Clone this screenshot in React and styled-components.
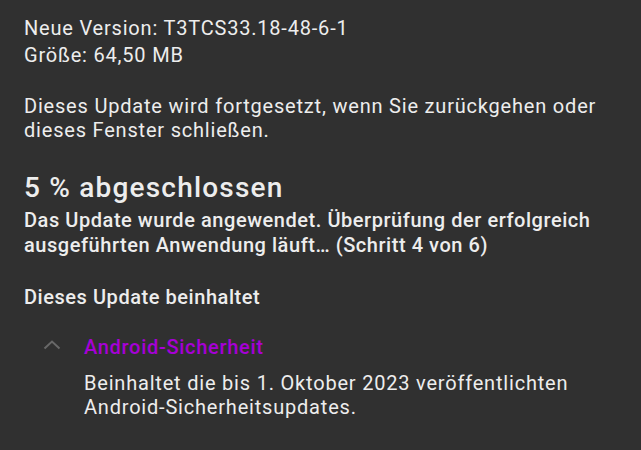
import React from 'react';
import styled, { createGlobalStyle } from 'styled-components';

const GlobalStyle = createGlobalStyle`
    html, body {
        margin: 0;
        background: #303030;
    }
    body {
        font-family: Roboto, "Noto Sans", sans-serif;
        color: #ededed;
    }
`;

const Page = styled.div`
    width: 641px;
    height: 450px;
    box-sizing: border-box;
    padding: 15px 24px 0 24px;
    background: #303030;
    overflow: hidden;
`;

const InfoLine = styled.div`
    font-size: 20px;
    line-height: 27px;
    letter-spacing: 0.8px;
`;

const Paragraph = styled.p`
    margin: ${(props) => props.top || 0}px 0 0 0;
    font-size: 20px;
    line-height: ${(props) => (props.bold ? 25 : 24)}px;
    font-weight: ${(props) => (props.bold ? 500 : 400)};
    letter-spacing: ${(props) => (props.bold ? 0.55 : 0.8)}px;
`;

const Progress = styled.h2`
    margin: 30px 0 0 0;
    font-size: 28px;
    line-height: 32px;
    font-weight: 500;
    letter-spacing: 1.2px;
`;

const Entry = styled.div`
    display: flex;
    margin-top: 25px;
`;

const Chevron = styled.div`
    width: 60px;
    flex-shrink: 0;
    display: flex;
    justify-content: flex-start;
    padding: 5px 0 0 19px;
    box-sizing: border-box;
`;

const EntryBody = styled.div`
    display: flex;
    flex-direction: column;
`;

const EntryTitle = styled.div`
    font-size: 20px;
    line-height: 25px;
    font-weight: 500;
    letter-spacing: 0.7px;
    color: #a600d6;
`;

const EntryText = styled.div`
    margin-top: 11px;
    font-size: 20px;
    line-height: 24px;
    letter-spacing: 0.8px;
`;

export default function App() {
    return (
        <Page>
            <GlobalStyle />
            <InfoLine>Neue Version: T3TCS33.18-48-6-1</InfoLine>
            <InfoLine>Größe: 64,50 MB</InfoLine>
            <Paragraph top={25}>
                Dieses Update wird fortgesetzt, wenn Sie zurückgehen oder dieses Fenster schließen.
            </Paragraph>
            <Progress>5 % abgeschlossen</Progress>
            <Paragraph top={4} bold>
                Das Update wurde angewendet. Überprüfung der erfolgreich ausgeführten Anwendung läuft… (Schritt 4 von 6)
            </Paragraph>
            <Paragraph top={27} bold>Dieses Update beinhaltet</Paragraph>
            <Entry>
                <Chevron>
                    <svg width="18" height="10" viewBox="0 0 18 10">
                        <path d="M1.5 8.5 L9 1.5 L16.5 8.5" fill="none" stroke="#686868" strokeWidth="2" />
                    </svg>
                </Chevron>
                <EntryBody>
                    <EntryTitle>Android-Sicherheit</EntryTitle>
                    <EntryText>
                        Beinhaltet die bis 1. Oktober 2023 veröffentlichten
                        <br />
                        Android-Sicherheitsupdates.
                    </EntryText>
                </EntryBody>
            </Entry>
        </Page>
    );
}
